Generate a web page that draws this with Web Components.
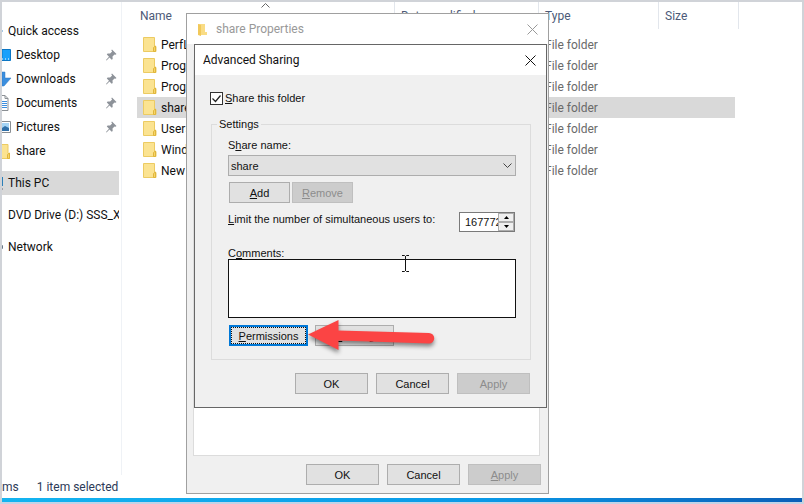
<!DOCTYPE html>
<html lang="en">
<head>
<meta charset="utf-8">
<title>Advanced Sharing</title>
<style>
  html, body {
    height: 100%;
    margin: 0;
  }
  body {
    --ui-font: Roboto, "Open Sans", sans-serif;
    --dialog-font: "Liberation Sans", Arial, sans-serif;
    position: relative;
    overflow: hidden;
    background: #fff;
    font: 12px/16px var(--ui-font);
    color: #111;
  }
  .properties {
    position: absolute;
    left: 186px;
    top: 13px;
  }
  .advanced {
    position: absolute;
    left: 194px;
    top: 44px;
  }
  pointer-arrow {
    position: absolute;
    left: 304px;
    top: 314px;
  }
  text-cursor {
    position: absolute;
    left: 401px;
    top: 255px;
  }
  .page {
    flex: 1;
    margin: 0 8px 0 6px;
    background: #fff;
    border: 1px solid #dcdcdc;
  }
  .check {
    margin: 0 0 12px;
  }
</style>
</head>
<body>
<explorer-window>
  <nav-item slot="nav" icon="star">Quick access</nav-item>
  <nav-item slot="nav" icon="desktop" nested pinned>Desktop</nav-item>
  <nav-item slot="nav" icon="download" nested pinned>Downloads</nav-item>
  <nav-item slot="nav" icon="document" nested pinned>Documents</nav-item>
  <nav-item slot="nav" icon="picture" nested pinned>Pictures</nav-item>
  <nav-item slot="nav" icon="folder" nested>share</nav-item>
  <nav-item slot="nav" icon="pc" section selected>This PC</nav-item>
  <nav-item slot="nav" section>DVD Drive (D:) SSS_X6</nav-item>
  <nav-item slot="nav" icon="net" section>Network</nav-item>
  <file-list></file-list>
  <span slot="status">ms</span>
  <span slot="status">1 item selected</span>
</explorer-window>

<dialog-window class="properties" inactive>
  <span slot="title">share Properties</span>
  <div class="page"></div>
  <dialog-button slot="actions">OK</dialog-button>
  <dialog-button slot="actions">Cancel</dialog-button>
  <dialog-button slot="actions" disabled><u>A</u>pply</dialog-button>
</dialog-window>

<dialog-window class="advanced">
  <span slot="title">Advanced Sharing</span>
  <check-field class="check" checked><u>S</u>hare this folder</check-field>
  <group-box>
    <span slot="legend">Settings</span>
    <combo-field value="share">S<u>h</u>are name:</combo-field>
    <button-row>
      <dialog-button size="small"><u>A</u>dd</dialog-button>
      <dialog-button size="small" disabled><u>R</u>emove</dialog-button>
    </button-row>
    <spin-field value="16777216"><u>L</u>imit the number of simultaneous users to:</spin-field>
    <memo-field>C<u>o</u>mments:</memo-field>
    <button-row wide>
      <dialog-button size="large" focused><u>P</u>ermissions</dialog-button>
      <dialog-button size="large"><u>C</u>aching</dialog-button>
    </button-row>
  </group-box>
  <dialog-button slot="actions">OK</dialog-button>
  <dialog-button slot="actions">Cancel</dialog-button>
  <dialog-button slot="actions" disabled>Apply</dialog-button>
</dialog-window>

<text-cursor></text-cursor>
<pointer-arrow></pointer-arrow>

<script>
const folderIcon = `
  <svg width="14" height="17" viewBox="0 0 14 17">
    <path d="M.5 1.500h11v9h1.500v5H.5z" fill="#fbe391" stroke="#eccb62"/>
    <path d="M10.500 15.500v-4l2-1.500v5.500z" fill="#f7d568" stroke="#e0b63c"/>
  </svg>`;

const navIcons = {
  star: `<svg width="3" height="16"><path d="M0 7l1 1-1 1z" fill="#4a90c8"/></svg>`,
  desktop: `<svg width="10" height="14"><path d="M0 1.500h8.500v11H0z" fill="#18a0fb" stroke="#0b76c4"/><path d="M0 11h8" stroke="#fff" stroke-dasharray="1 2"/></svg>`,
  download: `<svg width="10" height="16"><path d="M0 1h3v6h6L2 15H0z" fill="#3b8ede" stroke="#2c78c4" stroke-width=".5"/></svg>`,
  document: `<svg width="10" height="16"><path d="M0 .5h3l3 3v12H0" fill="#fff" stroke="#8a8f94"/><path d="M3 .5v3h3" fill="none" stroke="#8a8f94"/><path d="M0 6.500h5M0 8.500h5M0 10.500h5M0 12.500h5" stroke="#3b8ede"/></svg>`,
  picture: `<svg width="10" height="12"><path d="M0 .5h8.500v11H0" fill="#fff" stroke="#8a8f94"/><path d="M0 2h7v5H0z" fill="#a5d4f5"/><path d="M0 7l3-2 4 2v3H0z" fill="#2f6fa8"/></svg>`,
  folder: `<svg width="10" height="17"><path d="M0 1.500h6v9h1.500v5H0" fill="#fbe391" stroke="#eccb62"/><path d="M5.500 15.500v-4l2-1.500v5.500z" fill="#f7d568" stroke="#e0b63c"/></svg>`,
  pc: `<svg width="3" height="16"><path d="M.5 2v9" stroke="#2c7fb8"/><path d="M0 14h1" stroke="#667"/></svg>`,
  net: `<svg width="3" height="16"><path d="M0 6q1 2 0 4" fill="none" stroke="#567"/></svg>`
};

class BaseElement extends HTMLElement {
  constructor() {
    super();
    this.attachShadow({mode: "open"});
    this.shadowRoot.innerHTML = this.template();
  }
}

class ExplorerWindow extends BaseElement {
  template() {
    return `
      <style>
        :host {
          display: flex;
          flex-direction: column;
          box-sizing: border-box;
          height: 100vh;
          border: 2px solid #d0d3d8;
          border-bottom-color: #c3d3e6;
        }
        .main {
          display: flex;
          flex: 1;
          min-height: 0;
        }
        nav {
          display: flex;
          flex-direction: column;
          box-sizing: border-box;
          width: 120px;
          padding: 17px 2px 0 0;
          border-right: 1px solid #eff2f6;
        }
        .files {
          flex: 1;
          min-width: 0;
          padding-left: 15px;
        }
        footer {
          display: flex;
          gap: 18px;
          padding: 4px 0 3px;
          color: #2c3a57;
        }
        .taskbar {
          height: 4px;
          background: linear-gradient(90deg, #14b4f0, #0a9ae8 60%, #0a5fb8);
        }
      </style>
      <div class="main">
        <nav><slot name="nav"></slot></nav>
        <div class="files"><slot></slot></div>
      </div>
      <footer><slot name="status"></slot></footer>
      <div class="taskbar"></div>
    `;
  }
}

class NavItem extends BaseElement {
  template() {
    return `
      <style>
        :host {
          display: flex;
          align-items: center;
          height: 24px;
          overflow: hidden;
          white-space: nowrap;
        }
        :host([section]) {
          margin-top: 8px;
        }
        :host([selected]) {
          background: #d9d9d9;
        }
        .icon {
          flex: none;
          display: flex;
          width: 6px;
        }
        :host([nested]) .icon {
          width: 14px;
        }
        .label {
          flex: 1;
        }
        .pin {
          display: none;
          margin-right: 2px;
        }
        :host([pinned]) .pin {
          display: block;
        }
      </style>
      <span class="icon"></span>
      <span class="label"><slot></slot></span>
      <svg class="pin" width="11" height="12" viewBox="0 0 11 12">
        <path d="M6 .5l4.500 4.500-1 .8-1-.3-2 2 .2 2.500-1 .8L3.500 8.500.5 11.500 0 11l3-3.200L.8 5.500l.8-1 2.500.1 2-2L5.300 1.300z" fill="#8d9299"/>
      </svg>
    `;
  }

  connectedCallback() {
    this.shadowRoot.querySelector(".icon").innerHTML = navIcons[this.getAttribute("icon")] || "";
  }
}

class FileList extends BaseElement {
  template() {
    const names = ["PerfLogs", "Program Files", "Program Files (x86)", "share", "Users", "Windows", "New folder"];
    const rows = names.map(name => `
      <tr${name === "share" ? ' class="selected"' : ""}>
        <td><span class="name">${folderIcon}${name}</span></td>
        <td></td>
        <td class="type">File folder</td>
        <td></td>
      </tr>`).join("");
    return `
      <style>
        :host {
          display: block;
        }
        table {
          table-layout: fixed;
          width: 602px;
          border-collapse: separate;
          border-spacing: 0;
        }
        th {
          position: relative;
          height: 26px;
          padding: 1px 0 0 6px;
          border-right: 1px solid #e2e6ec;
          font-weight: normal;
          text-align: left;
          color: #4c5a78;
        }
        th:first-child {
          padding-left: 3px;
        }
        th svg {
          position: absolute;
          left: 124px;
          top: 1px;
        }
        tbody::before {
          content: "";
          display: block;
          height: 5px;
        }
        td {
          height: 21px;
          padding: 0 0 0 6px;
          white-space: nowrap;
          overflow: hidden;
          background-clip: padding-box;
        }
        td:last-child {
          border-right: 4px solid transparent;
        }
        .selected td {
          background-color: #d9d9d9;
        }
        .name {
          display: flex;
          align-items: center;
          gap: 4px;
        }
        .type {
          color: #6a6a6a;
        }
      </style>
      <table>
        <colgroup>
          <col style="width: 258px"><col style="width: 144px"><col style="width: 120px"><col style="width: 80px">
        </colgroup>
        <thead>
          <tr>
            <th>Name<svg width="9" height="5"><path d="M.5 4.500l4-4 4 4" fill="none" stroke="#666"/></svg></th>
            <th>Date modified</th>
            <th>Type</th>
            <th>Size</th>
          </tr>
        </thead>
        <tbody>${rows}</tbody>
      </table>
    `;
  }
}

class DialogWindow extends BaseElement {
  template() {
    return `
      <style>
        :host {
          display: flex;
          flex-direction: column;
          box-sizing: border-box;
          width: 353px;
          border: 1px solid #666;
          background: #f0f0f0;
          font: 11px/14px var(--dialog-font);
          color: #111;
        }
        :host([inactive]) {
          width: 363px;
          height: 481px;
          border-color: #a0a0a0;
        }
        header {
          display: flex;
          align-items: center;
          gap: 8px;
          height: 30px;
          padding: 0 10px 0 8px;
          background: #fff;
          font: 12px/16px var(--ui-font);
        }
        .folder {
          display: none;
        }
        :host([inactive]) .folder {
          display: block;
          margin-left: 2px;
        }
        :host([inactive]) header {
          color: #999;
        }
        .title {
          flex: 1;
        }
        .close {
          display: flex;
          padding: 0;
          border: 0;
          background: none;
          color: inherit;
        }
        .body {
          display: flex;
          flex: 1;
          flex-direction: column;
          padding: 16px 15px 0;
        }
        :host([inactive]) .body {
          padding: 16px 0 0;
        }
        footer {
          display: flex;
          justify-content: flex-end;
          gap: 8px;
          padding: 13px 16px;
        }
        :host([inactive]) footer {
          padding: 8px 7px;
        }
      </style>
      <header>
        <svg class="folder" width="11" height="13">
          <path d="M1 1h7v8h2v3H1z" fill="#f9dc85"/><path d="M1 1l3 1v11l-3-1z" fill="#f1c85a"/>
        </svg>
        <span class="title"><slot name="title"></slot></span>
        <button class="close" aria-label="Close">
          <svg width="11" height="11"><path d="M.5.5l10 10M10.500.5l-10 10" stroke="currentColor"/></svg>
        </button>
      </header>
      <div class="body"><slot></slot></div>
      <footer><slot name="actions"></slot></footer>
    `;
  }
}

class DialogButton extends BaseElement {
  template() {
    return `
      <style>
        :host {
          display: block;
          width: 73px;
        }
        :host([size="small"]) {
          width: 61px;
        }
        :host([size="large"]) {
          width: 79px;
        }
        button {
          display: block;
          box-sizing: border-box;
          width: 100%;
          height: 21px;
          padding: 0;
          border: 1px solid #adadad;
          background: #e1e1e1;
          font: inherit;
          color: inherit;
        }
        button:disabled {
          border-color: #bfbfbf;
          background: #ccc;
          color: #8c8c8c;
        }
        :host([focused]) button {
          border: 2px solid #0078d7;
          outline: 1px dotted #111;
          outline-offset: -3px;
        }
      </style>
      <button><slot></slot></button>
    `;
  }

  connectedCallback() {
    this.shadowRoot.querySelector("button").disabled = this.hasAttribute("disabled");
  }
}

class ButtonRow extends BaseElement {
  template() {
    return `
      <style>
        :host {
          display: flex;
          gap: 2px;
          margin: 6px 1px 0;
        }
        :host([wide]) {
          gap: 7px;
          margin-top: 7px;
        }
      </style>
      <slot></slot>
    `;
  }
}

class CheckField extends BaseElement {
  template() {
    return `
      <style>
        :host {
          display: flex;
          align-items: center;
          gap: 2px;
        }
        input {
          appearance: none;
          box-sizing: border-box;
          grid-area: 1 / 1;
          width: 13px;
          height: 13px;
          margin: 0;
          border: 1px solid #333;
          background: #fff;
        }
        .box {
          display: grid;
        }
        svg {
          grid-area: 1 / 1;
          pointer-events: none;
        }
        input:not(:checked) + svg {
          visibility: hidden;
        }
      </style>
      <span class="box">
        <input type="checkbox" id="box">
        <svg width="13" height="13"><path d="M2.500 6.500l3 3 5-6" fill="none" stroke="#222" stroke-width="1.200"/></svg>
      </span>
      <label for="box"><slot></slot></label>
    `;
  }

  connectedCallback() {
    this.shadowRoot.querySelector("input").checked = this.hasAttribute("checked");
  }
}

class GroupBox extends BaseElement {
  template() {
    return `
      <style>
        :host {
          display: block;
        }
        fieldset {
          margin: 0 0 0 1px;
          padding: 7px 14px 13px 16px;
          border: 1px solid #dcdcdc;
        }
        legend {
          margin-left: -11px;
          padding: 0 2px;
        }
      </style>
      <fieldset>
        <legend><slot name="legend"></slot></legend>
        <slot></slot>
      </fieldset>
    `;
  }
}

class ComboField extends BaseElement {
  template() {
    return `
      <style>
        :host {
          display: block;
        }
        label {
          display: block;
          margin-bottom: 3px;
        }
        .combo {
          display: grid;
          align-items: center;
        }
        select {
          appearance: none;
          grid-area: 1 / 1;
          box-sizing: border-box;
          height: 21px;
          padding: 0 2px;
          border: 1px solid #adadad;
          border-radius: 0;
          background: #e1e1e1;
          font: inherit;
          color: inherit;
        }
        svg {
          grid-area: 1 / 1;
          justify-self: end;
          margin-right: 4px;
          pointer-events: none;
        }
      </style>
      <label for="combo"><slot></slot></label>
      <div class="combo">
        <select id="combo"></select>
        <svg width="9" height="6"><path d="M.5.5l4 4 4-4" fill="none" stroke="#444"/></svg>
      </div>
    `;
  }

  connectedCallback() {
    const select = this.shadowRoot.querySelector("select");
    select.replaceChildren(new Option(this.getAttribute("value")));
  }
}

class SpinField extends BaseElement {
  template() {
    return `
      <style>
        :host {
          display: flex;
          justify-content: space-between;
          margin: 9px 1px 0 0;
        }
        .spin {
          display: flex;
          box-sizing: border-box;
          width: 56px;
          height: 20px;
          border: 1px solid #7a7a7a;
          background: #fff;
        }
        input {
          appearance: textfield;
          flex: 1;
          min-width: 0;
          margin-left: 5px;
          padding: 0;
          border: 0;
          background: none;
          font: inherit;
          color: inherit;
        }
        input::-webkit-inner-spin-button {
          appearance: none;
          display: none;
        }
        .arrows {
          display: flex;
          flex-direction: column;
          width: 16px;
        }
        button {
          display: flex;
          flex: 1;
          align-items: center;
          justify-content: center;
          min-height: 0;
          padding: 0;
          border: 1px solid #adadad;
          background: #f0f0f0;
        }
      </style>
      <label for="value"><slot></slot></label>
      <div class="spin">
        <input type="number" id="value">
        <div class="arrows">
          <button class="up" aria-label="Increase"><svg width="5" height="3"><path d="M0 3l2.500-3L5 3z"/></svg></button>
          <button class="down" aria-label="Decrease"><svg width="5" height="3"><path d="M0 0l2.500 3L5 0z"/></svg></button>
        </div>
      </div>
    `;
  }

  connectedCallback() {
    const input = this.shadowRoot.querySelector("input");
    input.value = this.getAttribute("value");
    this.shadowRoot.querySelector(".up").onclick = () => input.stepUp();
    this.shadowRoot.querySelector(".down").onclick = () => input.stepDown();
  }
}

class MemoField extends BaseElement {
  template() {
    return `
      <style>
        :host {
          display: block;
          margin-top: 15px;
        }
        label {
          display: block;
          line-height: 12px;
        }
        textarea {
          display: block;
          box-sizing: border-box;
          width: 100%;
          height: 59px;
          padding: 2px;
          border: 1px solid #111;
          background: #fff;
          font: inherit;
          resize: none;
        }
      </style>
      <label for="memo"><slot></slot></label>
      <textarea id="memo"></textarea>
    `;
  }
}

class TextCursor extends BaseElement {
  template() {
    return `
      <style>
        :host {
          display: block;
          pointer-events: none;
        }
        svg {
          display: block;
        }
      </style>
      <svg width="9" height="17"><path d="M1 .5h2.500l1 1 1-1H8M4.500 1v15M1 16.500h2.500l1-1 1 1H8" fill="none" stroke="#111"/></svg>
    `;
  }
}

class PointerArrow extends BaseElement {
  template() {
    return `
      <style>
        :host {
          display: block;
          pointer-events: none;
        }
        svg {
          display: block;
          filter: drop-shadow(0 3px 2px rgba(0, 0, 0, .45));
        }
      </style>
      <svg width="136" height="44">
        <path d="M4 20.500L34.500 6v10.500L125 19a5 5 0 0 1 0 10.500L34.500 26.500V36z" fill="#fb4444"/>
      </svg>
    `;
  }
}

customElements.define("explorer-window", ExplorerWindow);
customElements.define("nav-item", NavItem);
customElements.define("file-list", FileList);
customElements.define("dialog-window", DialogWindow);
customElements.define("dialog-button", DialogButton);
customElements.define("button-row", ButtonRow);
customElements.define("check-field", CheckField);
customElements.define("group-box", GroupBox);
customElements.define("combo-field", ComboField);
customElements.define("spin-field", SpinField);
customElements.define("memo-field", MemoField);
customElements.define("text-cursor", TextCursor);
customElements.define("pointer-arrow", PointerArrow);
</script>
</body>
</html>
